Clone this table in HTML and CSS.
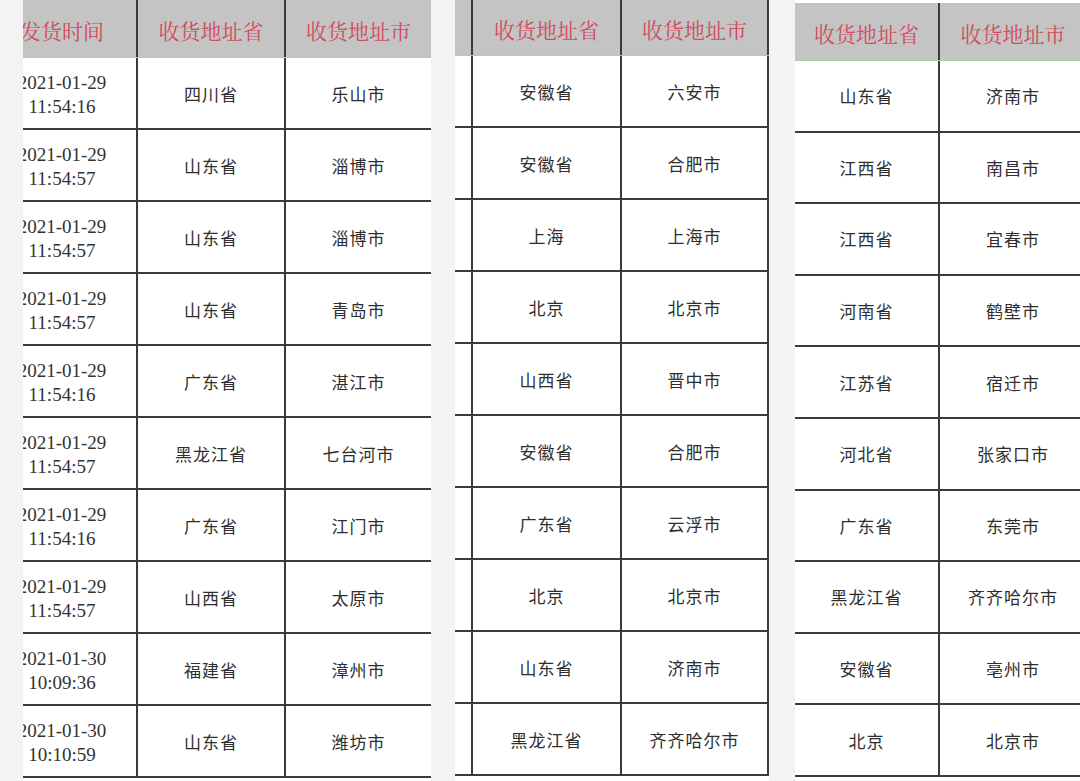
FILE: index.html
```html
<!DOCTYPE html>
<html lang="zh-CN">
<head>
<meta charset="utf-8">
<title>收货地址表</title>
<link rel="stylesheet" href="styles.css">
</head>
<body>
<div class="page">
  <div class="lead"></div>

  <div class="panel p1">
    <div class="grid">
      <div class="row hd"><div class="cell">发货时间</div><div class="cell">收货地址省</div><div class="cell">收货地址市</div></div>
      <div class="row"><div class="cell time">2021-01-29<br>11:54:16</div><div class="cell">四川省</div><div class="cell">乐山市</div></div>
      <div class="row"><div class="cell time">2021-01-29<br>11:54:57</div><div class="cell">山东省</div><div class="cell">淄博市</div></div>
      <div class="row"><div class="cell time">2021-01-29<br>11:54:57</div><div class="cell">山东省</div><div class="cell">淄博市</div></div>
      <div class="row"><div class="cell time">2021-01-29<br>11:54:57</div><div class="cell">山东省</div><div class="cell">青岛市</div></div>
      <div class="row"><div class="cell time">2021-01-29<br>11:54:16</div><div class="cell">广东省</div><div class="cell">湛江市</div></div>
      <div class="row"><div class="cell time">2021-01-29<br>11:54:57</div><div class="cell">黑龙江省</div><div class="cell">七台河市</div></div>
      <div class="row"><div class="cell time">2021-01-29<br>11:54:16</div><div class="cell">广东省</div><div class="cell">江门市</div></div>
      <div class="row"><div class="cell time">2021-01-29<br>11:54:57</div><div class="cell">山西省</div><div class="cell">太原市</div></div>
      <div class="row"><div class="cell time">2021-01-30<br>10:09:36</div><div class="cell">福建省</div><div class="cell">漳州市</div></div>
      <div class="row"><div class="cell time">2021-01-30<br>10:10:59</div><div class="cell">山东省</div><div class="cell">潍坊市</div></div>
    </div>
  </div>

  <div class="panel p2">
    <div class="grid">
      <div class="row hd"><div class="cell stub"></div><div class="cell">收货地址省</div><div class="cell">收货地址市</div></div>
      <div class="row"><div class="cell stub"></div><div class="cell">安徽省</div><div class="cell">六安市</div></div>
      <div class="row"><div class="cell stub"></div><div class="cell">安徽省</div><div class="cell">合肥市</div></div>
      <div class="row"><div class="cell stub"></div><div class="cell">上海</div><div class="cell">上海市</div></div>
      <div class="row"><div class="cell stub"></div><div class="cell">北京</div><div class="cell">北京市</div></div>
      <div class="row"><div class="cell stub"></div><div class="cell">山西省</div><div class="cell">晋中市</div></div>
      <div class="row"><div class="cell stub"></div><div class="cell">安徽省</div><div class="cell">合肥市</div></div>
      <div class="row"><div class="cell stub"></div><div class="cell">广东省</div><div class="cell">云浮市</div></div>
      <div class="row"><div class="cell stub"></div><div class="cell">北京</div><div class="cell">北京市</div></div>
      <div class="row"><div class="cell stub"></div><div class="cell">山东省</div><div class="cell">济南市</div></div>
      <div class="row"><div class="cell stub"></div><div class="cell">黑龙江省</div><div class="cell">齐齐哈尔市</div></div>
    </div>
  </div>

  <div class="panel p3">
    <div class="grid">
      <div class="row hd"><div class="cell">收货地址省</div><div class="cell">收货地址市</div></div>
      <div class="row"><div class="cell">山东省</div><div class="cell">济南市</div></div>
      <div class="row"><div class="cell">江西省</div><div class="cell">南昌市</div></div>
      <div class="row"><div class="cell">江西省</div><div class="cell">宜春市</div></div>
      <div class="row"><div class="cell">河南省</div><div class="cell">鹤壁市</div></div>
      <div class="row"><div class="cell">江苏省</div><div class="cell">宿迁市</div></div>
      <div class="row"><div class="cell">河北省</div><div class="cell">张家口市</div></div>
      <div class="row"><div class="cell">广东省</div><div class="cell">东莞市</div></div>
      <div class="row"><div class="cell">黑龙江省</div><div class="cell">齐齐哈尔市</div></div>
      <div class="row"><div class="cell">安徽省</div><div class="cell">亳州市</div></div>
      <div class="row"><div class="cell">北京</div><div class="cell">北京市</div></div>
    </div>
  </div>
</div>
</body>
</html>
```

FILE: styles.css
```css
* { box-sizing: border-box; }

html, body {
  margin: 0;
  padding: 0;
  background: #f3f3f3;
}

.page {
  display: flex;
  width: 1080px;
  height: 781px;
  overflow: hidden;
  background: #f3f3f3;
  font-family: "Noto Sans CJK SC", "Noto Sans", sans-serif;
  color: #2e2e2e;
}

.lead { flex: none; width: 23px; }

.panel {
  flex: none;
  height: 781px;
  overflow: hidden;
  background: #fff;
}

.p1 { width: 408px; margin-right: 24px; }
.p2 { width: 314px; margin-right: 26px; }
.p3 { width: 285px; padding-top: 3px; }

.p1 .grid { width: 443px; margin-left: -35px; }

.row {
  display: grid;
  height: 72px;
  border-bottom: 2px solid #3a3a3a;
}

.p1 .row { grid-template-columns: 148px 148px 147px; }
.p2 .row { grid-template-columns: 16px 149px 149px; }
.p3 .row { grid-template-columns: 143px 148px; height: 71.6px; }

.row.hd {
  background: #c4c4c4;
  border-bottom: 1px solid #a6d3a6;
  height: 58px;
}
.p2 .row.hd { height: 56px; }
.p3 .row.hd { height: 58px; }

.cell {
  display: flex;
  align-items: center;
  justify-content: center;
  text-align: center;
  font-size: 17px;
  letter-spacing: 1px;
  white-space: nowrap;
}

.cell + .cell { border-left: 2px solid #3a3a3a; }
.p2 .cell:last-child { border-right: 2px solid #3a3a3a; }
.p2 .stub + .cell { border-left: 2px solid #3a3a3a; }

.hd .cell {
  font-family: "Noto Serif CJK SC", "Noto Sans CJK SC", serif;
  font-size: 21px;
  letter-spacing: 0;
  color: #d24a5c;
  padding-top: 3px;
}

.cell.time {
  font-family: "Liberation Serif", "Times New Roman", serif;
  font-size: 19px;
  line-height: 24px;
  letter-spacing: 0;
  color: #333;
  padding-top: 4px;
}
```
